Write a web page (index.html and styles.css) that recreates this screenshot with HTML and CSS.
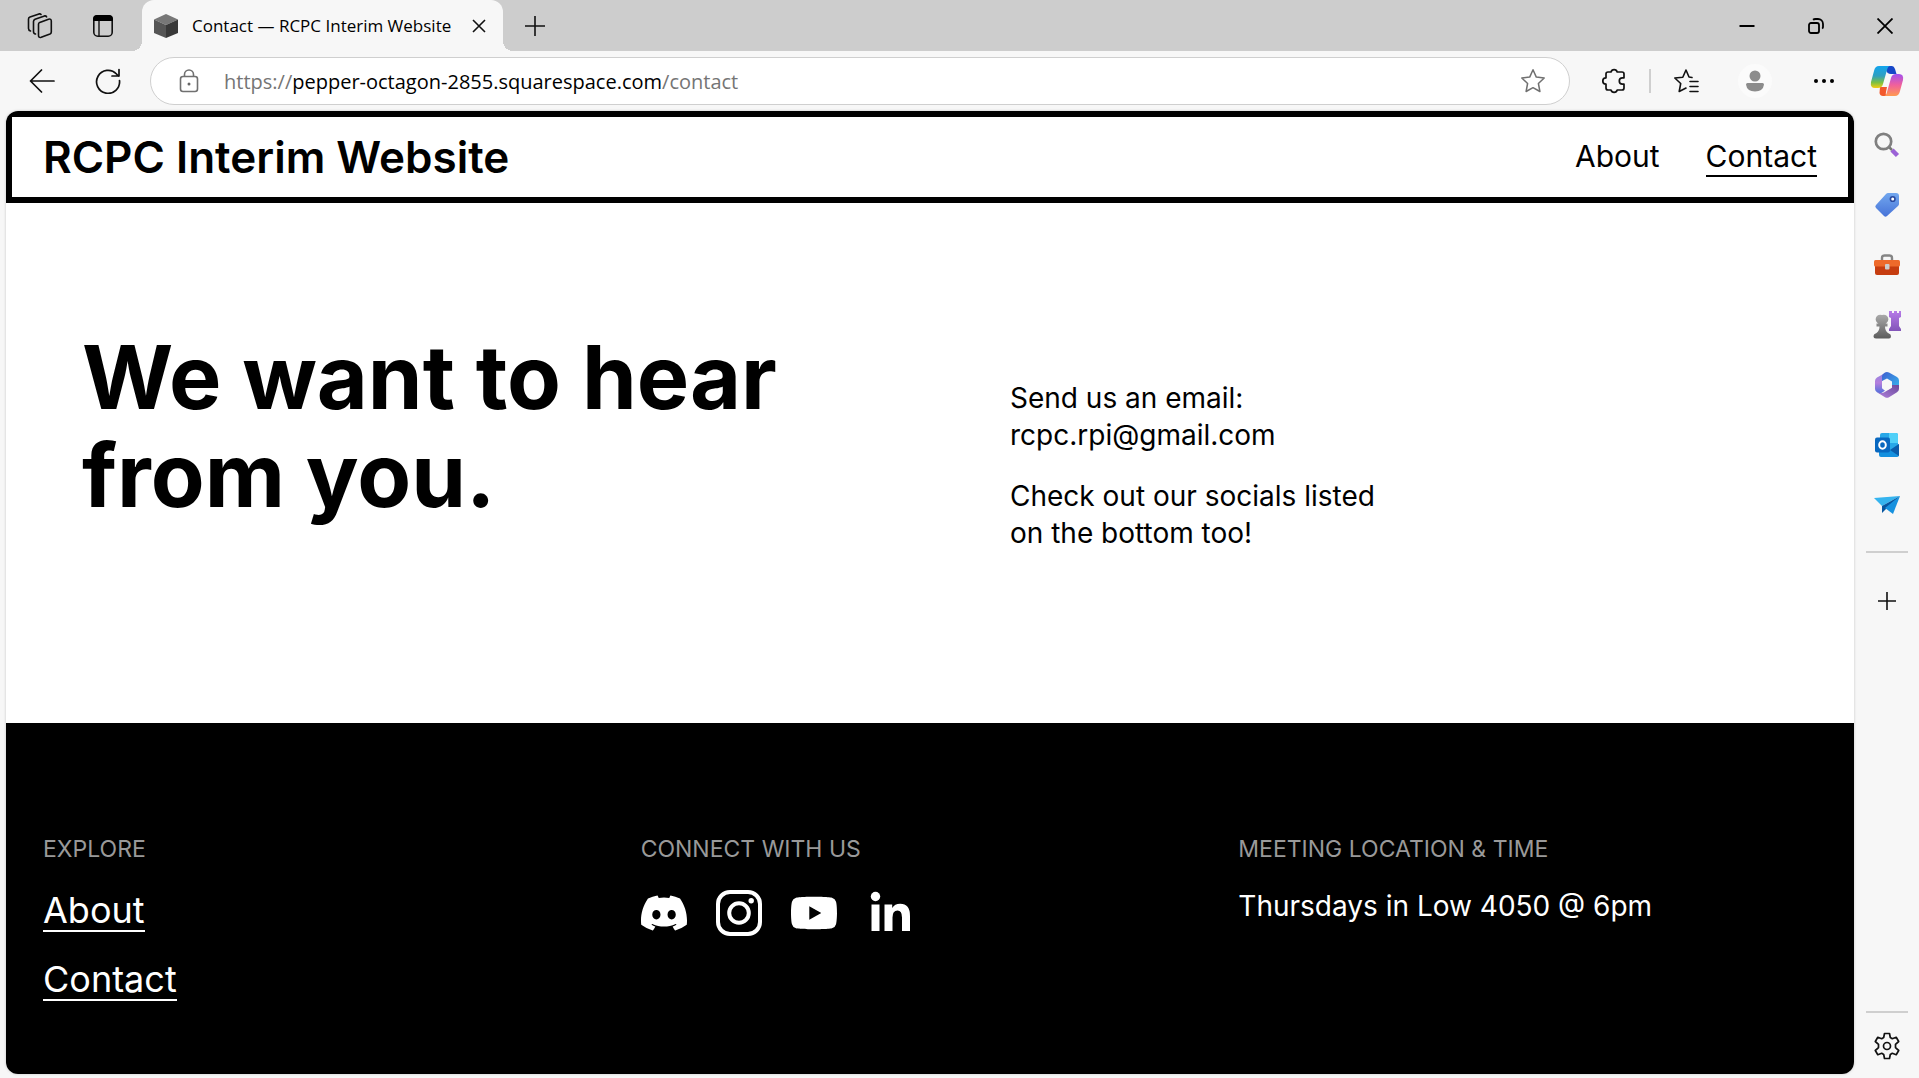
FILE: index.html
```html
<!DOCTYPE html>
<html lang="en">
<head>
<meta charset="utf-8">
<title>Contact — RCPC Interim Website</title>
<link rel="stylesheet" href="styles.css">
</head>
<body>
<div class="tabstrip">
  <button class="strip-btn" aria-label="Workspaces"><svg width="26" height="26" viewBox="0 0 26 26" fill="none" stroke="#111" stroke-width="1.6" stroke-linejoin="round" stroke-linecap="round"><path d="M11.5 11.2 Q11.5 10 12.7 9.4 L21.5 6.2 Q24.3 5.5 24.3 8 L24.3 19 Q24.3 20.400 23 21 L14.200 24.300 Q11.500 25 11.500 22.500Z"/><path d="M8.500 21 Q6.500 20.600 6.500 18.500 L6.500 8.600 Q6.500 7 8 6.300 L17.500 2.900 Q19 2.600 19.600 3.800"/><path d="M3.500 18 Q1.500 17.500 1.500 15.500 L1.500 6 Q1.500 4.600 3 4 L12 .9 Q13.400 .6 14 1.500"/></svg></button>
  <button class="strip-btn" aria-label="Tab actions"><svg width="22" height="24" viewBox="0 0 22 24"><rect x="1.800" y="1.800" width="18.400" height="20.400" rx="4" fill="none" stroke="#111" stroke-width="1.600"/><path d="M1 7V5a4 4 0 0 1 4-4h12a4 4 0 0 1 4 4v2z" fill="#000"/><path d="M7 7v15" stroke="#111" stroke-width="1.400"/></svg></button>
  <div class="tab">
    <svg width="24" height="26" viewBox="0 0 24 26"><path d="M12 1 24 6.500 12 12 0 6.500z" fill="#777"/><path d="M0 6.500 12 12v13L0 20z" fill="#555"/><path d="M24 6.500 12 12v13l12-5z" fill="#383838"/></svg>
    <span class="tab-title">Contact — RCPC Interim Website</span>
    <button class="tab-close" aria-label="Close tab"><svg width="14" height="14" viewBox="0 0 14 14" stroke="#111" stroke-width="1.600"><path d="M1 1 13 13M13 1 1 13"/></svg></button>
  </div>
  <button class="new-tab" aria-label="New tab"><svg width="22" height="22" viewBox="0 0 22 22" stroke="#111" stroke-width="1.600"><path d="M11 1v20M1 11h20"/></svg></button>
  <div class="window-controls">
    <button aria-label="Minimize"><svg width="16" height="16" viewBox="0 0 16 16" stroke="#000" stroke-width="2"><path d="M.5 8h15"/></svg></button>
    <button aria-label="Restore"><svg width="16" height="16" viewBox="0 0 16 16" fill="none" stroke="#000" stroke-width="1.800"><rect x="1" y="5" width="10" height="10" rx="2"/><path d="M5 1.800Q6 1 7.500 1H10a5 5 0 0 1 5 5v3q0 1-.8 1.600"/></svg></button>
    <button aria-label="Close"><svg width="16" height="16" viewBox="0 0 16 16" stroke="#000" stroke-width="1.800"><path d="M.5.5l15 15M15.500.5l-15 15"/></svg></button>
  </div>
</div>

<div class="workspace">
  <div class="browser-main">
    <div class="toolbar">
      <button class="nav-btn" aria-label="Back"><svg width="26" height="24" viewBox="0 0 26 24" fill="none" stroke="#111" stroke-width="1.700" stroke-linecap="round" stroke-linejoin="round"><path d="M25 12H2M12.500 1 1.500 12l11 11"/></svg></button>
      <button class="nav-btn" aria-label="Refresh"><svg width="26" height="26" viewBox="0 0 26 26" fill="none" stroke="#111" stroke-width="1.700" stroke-linecap="round" stroke-linejoin="round"><path d="M24.500 12.500A11.500 11.500 0 1 1 21.500 6l1.800 2M24 1.500V8h-7"/></svg></button>
      <div class="address">
        <svg width="20" height="24" viewBox="0 0 20 24" fill="none" stroke="#707070" stroke-width="1.600"><rect x="1.500" y="7.500" width="17" height="15" rx="2.500"/><path d="M5.500 7.500V5.500a4.500 4.500 0 0 1 9 0v2"/><circle cx="10" cy="15" r="1.500" fill="#666" stroke="none"/></svg>
        <div class="url"><span>https://</span>pepper-octagon-2855.squarespace.com<span>/contact</span></div>
        <button class="fav" aria-label="Add to favorites"><svg width="26" height="26" viewBox="0 0 26 26" fill="none" stroke="#707070" stroke-width="1.500" stroke-linejoin="round"><path d="M13 1.800l3.300 7.300 7.900.9-5.800 5.500 1.500 8L13 19.700l-6.900 3.800 1.500-8L1.800 10l7.900-.9z"/></svg></button>
      </div>
      <div class="ext-group">
        <button class="tool-btn" aria-label="Extensions"><svg width="26" height="26" viewBox="0 0 26 26" fill="none" stroke="#111" stroke-width="1.700" stroke-linejoin="round"><path d="M5 6q0-2 2-2h3a3.200 3.200 0 0 1 6.200 0H21q2 0 2 2v3.800h-1.500a3.200 3.200 0 0 0 0 6.400H23V20q0 2-2 2h-4.800a3.200 3.200 0 0 1-6.200 0H7q-2 0-2-2v-3.800a3.200 3.200 0 0 1 0-6.400z"/></svg></button>
        <span class="divider-v"></span>
        <button class="tool-btn" aria-label="Favorites"><svg width="26" height="26" viewBox="0 0 26 26" fill="none" stroke="#111" stroke-width="1.600" stroke-linejoin="round" stroke-linecap="round"><path d="M19 9.500l-3-.5-3-7-3.200 7.200-8 .8 5.900 5.500-1.500 8L13 20M17 13.500h8M17 18.500h8M17 23.500h8"/></svg></button>
      </div>
      <button class="tool-btn" aria-label="Profile"><svg width="36" height="36" viewBox="0 0 36 36"><circle cx="18" cy="18" r="17" fill="#fbfbfb"/><circle cx="18" cy="13" r="5.500" fill="#8c8c8c"/><path d="M9 21.500q0-1.500 1.500-1.500h15q1.500 0 1.500 1.500Q26 28.500 18 28.500T9 21.500z" fill="#8c8c8c"/></svg></button>
      <button class="tool-btn" aria-label="Settings and more"><svg width="20" height="6" viewBox="0 0 20 6"><circle cx="2" cy="3" r="2"/><circle cx="10" cy="3" r="2"/><circle cx="18" cy="3" r="2"/></svg></button>
    </div>

    <div class="site">
      <header class="site-header">
        <a class="site-title" href="#">RCPC Interim Website</a>
        <nav class="site-nav"><a href="#">About</a><a class="active" href="#">Contact</a></nav>
      </header>
      <main class="hero">
        <h1>We want to hear from you.</h1>
        <div class="hero-copy">
          <p>Send us an email: rcpc.rpi@gmail.com</p>
          <p>Check out our socials listed on the bottom too!</p>
        </div>
      </main>
      <footer class="site-footer">
        <section>
          <h2>EXPLORE</h2>
          <div class="footer-links"><a href="#">About</a><a href="#">Contact</a></div>
        </section>
        <section>
          <h2>CONNECT WITH US</h2>
          <div class="socials">
            <a href="#" aria-label="Discord"><svg width="46" height="46" viewBox="0 0 24 24" fill="#fff"><path d="M20.317 4.370a19.791 19.791 0 0 0-4.885-1.515.074.074 0 0 0-.079.037c-.211.375-.444.864-.608 1.250a18.270 18.270 0 0 0-5.487 0 12.640 12.640 0 0 0-.617-1.250.077.077 0 0 0-.079-.037A19.736 19.736 0 0 0 3.677 4.370a.070.070 0 0 0-.032.027C.533 9.046-.320 13.580.099 18.057a.082.082 0 0 0 .031.057 19.900 19.900 0 0 0 5.993 3.030.078.078 0 0 0 .084-.028 14.090 14.090 0 0 0 1.226-1.994.076.076 0 0 0-.041-.106 13.107 13.107 0 0 1-1.872-.892.077.077 0 0 1-.008-.128 10.200 10.200 0 0 0 .372-.292.074.074 0 0 1 .077-.010c3.928 1.793 8.180 1.793 12.062 0a.074.074 0 0 1 .078.010c.120.098.246.198.373.292a.077.077 0 0 1-.006.127 12.299 12.299 0 0 1-1.873.892.077.077 0 0 0-.041.107c.360.698.772 1.362 1.225 1.993a.076.076 0 0 0 .084.028 19.839 19.839 0 0 0 6.002-3.030.077.077 0 0 0 .032-.054c.500-5.177-.838-9.674-3.549-13.660a.061.061 0 0 0-.031-.030zM8.020 15.330c-1.183 0-2.157-1.085-2.157-2.419 0-1.333.956-2.419 2.157-2.419 1.210 0 2.176 1.096 2.157 2.420 0 1.333-.956 2.418-2.157 2.418zm7.975 0c-1.183 0-2.157-1.085-2.157-2.419 0-1.333.955-2.419 2.157-2.419 1.210 0 2.176 1.096 2.157 2.420 0 1.333-.946 2.418-2.157 2.418z"/></svg></a>
            <a href="#" aria-label="Instagram"><svg width="46" height="46" viewBox="0 0 46 46" fill="none" stroke="#fff" stroke-width="4"><rect x="2" y="2" width="42" height="42" rx="12"/><circle cx="23" cy="23" r="9.800"/><circle cx="35.200" cy="10.800" r="2.700" fill="#fff" stroke="none"/></svg></a>
            <a href="#" aria-label="YouTube"><svg width="46" height="46" viewBox="0 0 24 24" fill="#fff"><path d="M23.498 6.186a3.016 3.016 0 0 0-2.122-2.136C19.505 3.545 12 3.545 12 3.545s-7.505 0-9.377.505A3.017 3.017 0 0 0 .502 6.186C0 8.070 0 12 0 12s0 3.930.502 5.814a3.016 3.016 0 0 0 2.122 2.136c1.871.505 9.376.505 9.376.505s7.505 0 9.377-.505a3.015 3.015 0 0 0 2.122-2.136C24 15.930 24 12 24 12s0-3.930-.502-5.814zM9.545 15.568V8.432L15.818 12l-6.273 3.568z"/></svg></a>
            <a href="#" aria-label="LinkedIn"><svg width="46" height="46" viewBox="0 0 46 46" fill="#fff"><circle cx="9.500" cy="6.500" r="4.700"/><path d="M5.500 14.500h8V41h-8zM18.500 14.500h7.700v3.600q2.400-4.300 8-4.300Q44 13.800 44 26v15h-8V27.500q0-7-4.500-7-5 0-5 7V41h-8z"/></svg></a>
          </div>
        </section>
        <section>
          <h2>MEETING LOCATION &amp; TIME</h2>
          <p>Thursdays in Low 4050 @ 6pm</p>
        </section>
      </footer>
    </div>
  </div>

  <aside class="sidebar" aria-label="Browser sidebar">
    <button class="side-btn copilot" aria-label="Copilot"><svg width="34" height="32" viewBox="0 0 34 32"><defs><linearGradient id="ca" x1="0" y1="0" x2="0" y2="1"><stop offset="0" stop-color="#12a5ee"/><stop offset=".45" stop-color="#2f9fc0"/><stop offset=".75" stop-color="#7bc043"/><stop offset="1" stop-color="#f6cc10"/></linearGradient><linearGradient id="cb" x1="0" y1="0" x2="0" y2="1"><stop offset="0" stop-color="#a350ee"/><stop offset=".5" stop-color="#f0609c"/><stop offset="1" stop-color="#ff9a50"/></linearGradient></defs><path d="M17 1h5q2 0 3 3l1.500 5H21q-4 0-5-4z" fill="#1647c8"/><path d="M10 22h7l-1 5q-1 4 2 4h-5q-3 0-3.500-3z" fill="#f2582c"/><path d="M9 1h11q-2 0-3 4l-4 14q-1 4-5 4H5q-5 0-4-6L4 6q1-5 5-5z" fill="url(#ca)"/><path d="M25 31H14q2 0 3-4l4-14q1-4 5-4h3q5 0 4 6l-3 11q-1 5-5 5z" fill="url(#cb)"/></svg></button>
    <button class="side-btn" aria-label="Search"><svg width="26" height="26" viewBox="0 0 26 26" fill="none"><path d="M18 18l5.500 5.500" stroke="#9b62d6" stroke-width="4.500"/><path d="M15 15l3 3" stroke="#777" stroke-width="2.500"/><circle cx="9.500" cy="9.500" r="7.700" stroke="#808080" stroke-width="2.700"/></svg></button>
    <button class="side-btn" aria-label="Shopping"><svg width="26" height="26" viewBox="0 0 26 26"><defs><linearGradient id="tg" x1="0" y1="0" x2="0" y2="1"><stop stop-color="#72a7ee"/><stop offset="1" stop-color="#4773d8"/></linearGradient></defs><path d="M14 1h8q3 0 3 3v8q0 1-1 2L13 24q-1.500 1.500-3 0L2 16q-1.500-1.500 0-3L12 2q1-1 2-1z" fill="url(#tg)"/><circle cx="18.700" cy="7" r="2.300" fill="#fff" stroke="#29499e" stroke-width="1.600"/></svg></button>
    <button class="side-btn" aria-label="Tools"><svg width="28" height="22" viewBox="0 0 28 22"><path d="M9 7V4q0-2.500 2.500-2.500h5Q19 1.500 19 4v3" fill="none" stroke="#858585" stroke-width="2.400"/><rect x="2" y="7" width="24" height="14" rx="2" fill="#c63d10"/><rect x="1" y="6" width="26" height="6.500" rx="1.500" fill="#ee6a2b"/><rect x="12" y="10" width="4.500" height="5.500" rx="1" fill="#ccc"/></svg></button>
    <button class="side-btn" aria-label="Games"><svg width="28" height="28" viewBox="0 0 28 28"><defs><linearGradient id="pg" x1="0" y1="0" x2="0" y2="1"><stop stop-color="#aaa"/><stop offset="1" stop-color="#5c5c5c"/></linearGradient><linearGradient id="rg" x1="0" y1="0" x2="0" y2="1"><stop stop-color="#b67be8"/><stop offset="1" stop-color="#8255b8"/></linearGradient></defs><path d="M16 0h3v2h2V0h3v2h2V0h2v6l-2 1v8l2 3v2H16v-2l2-3V7l-2-1z" fill="url(#rg)"/><path d="M9 4a4.500 4.500 0 0 1 3.500 8.500h2v3H12q0 4 3 6.500 3 1 3 3 0 2.500-2 2.500H3q-2.500 0-2.500-2.500 0-2 3-3 3-2.500 3-6.500h-3v-3h2A4.500 4.500 0 0 1 9 4z" fill="url(#pg)"/></svg></button>
    <button class="side-btn" aria-label="Microsoft 365"><svg width="26" height="28" viewBox="0 0 26 28"><defs><linearGradient id="ma" x1="0" y1="0" x2="0" y2="1"><stop stop-color="#8f86e0"/><stop offset=".5" stop-color="#b57edc"/><stop offset="1" stop-color="#4a6fdc"/></linearGradient><linearGradient id="mb" x1="0" y1="0" x2="1" y2="1"><stop stop-color="#3f5fd0"/><stop offset="1" stop-color="#35b5ee"/></linearGradient><linearGradient id="mc" x1="0" y1="1" x2="1" y2="0"><stop stop-color="#b283dc"/><stop offset="1" stop-color="#6a479c"/></linearGradient></defs><path d="M13 1 3 6.500Q1 7.500 1 10v8q0 2 2 3.200l3 1.600 5-3-3-2.500v-7z" fill="url(#ma)"/><path d="M11 1.500q2-1 4 0l8 4.500q2 1 2 3.500V17l-7-3v-3.500l-5-3L8 10V5q0-2 3-3.500z" fill="url(#mb)"/><path d="M25 14v4q0 2-2 3.200l-8 5q-2 1-4 0l-8-5q6 2 9-1l6-3.500V14z" fill="url(#mc)"/><circle cx="13" cy="14" r="4.600" fill="#f7f7f7"/></svg></button>
    <button class="side-btn" aria-label="Outlook"><svg width="26" height="26" viewBox="0 0 26 26"><rect x="6" y="1" width="18" height="20" rx="2" fill="#28a8e8"/><path d="M15 1h7q2 0 2 2v8h-9z" fill="#50d0f8"/><path d="M5 14l10 5 10-7v11q0 2-2 2H7q-2 0-2-2z" fill="#1490df"/><path d="M25 12v12l-9-6z" fill="#0a5cab"/><rect x="1" y="5.500" width="15" height="15" rx="2" fill="#0868c0"/><ellipse cx="8.500" cy="13" rx="3.300" ry="3.800" fill="none" stroke="#fff" stroke-width="2"/></svg></button>
    <button class="side-btn" aria-label="Drop"><svg width="26" height="20" viewBox="0 0 26 20"><path d="M0 3 26 1 8 11z" fill="#35b4ef"/><path d="M26 1 8 11v7l4-4z" fill="#0756a0"/><path d="M26 1 11 13l8 6z" fill="#1691df"/></svg></button>
    <span class="divider-h"></span>
    <button class="side-btn" aria-label="Customize"><svg width="18" height="18" viewBox="0 0 18 18" stroke="#111" stroke-width="1.600"><path d="M9 0v18M0 9h18"/></svg></button>
    <span class="divider-h bottom"></span>
    <button class="side-btn" aria-label="Settings"><svg width="26" height="28" viewBox="0 0 26 28" fill="none" stroke="#111" stroke-width="1.700" stroke-linejoin="round"><path d="M10.500 1.500h5l.8 4 2 1.200 3.900-1.400 2.500 4.200-3.200 2.900v3.200l3.200 2.900-2.500 4.200-3.900-1.400-2 1.200-.8 4h-5l-.8-4-2-1.200-3.900 1.400-2.500-4.200 3.200-2.900v-3.200L1.300 9.500l2.500-4.200 3.900 1.400 2-1.200z"/><circle cx="13" cy="14" r="3.500"/></svg></button>
  </aside>
</div>
</body>
</html>
```
FILE: styles.css
```css
* { box-sizing: border-box; }
body {
  margin: 0;
  min-height: 100vh;
  display: flex;
  flex-direction: column;
  background: #f7f7f7;
  color: #000;
  font-family: Inter, "Liberation Sans", sans-serif;
}
button {
  display: flex;
  align-items: center;
  justify-content: center;
  padding: 0;
  border: 0;
  background: none;
  color: inherit;
}
svg { display: block; flex: none; }
a { color: inherit; text-decoration: none; }
h1, h2, p { margin: 0; }

.tabstrip {
  display: flex;
  height: 51px;
  padding-left: 8px;
  background: #cdcdcd;
  font-family: "Open Sans", "Noto Sans", sans-serif;
}
.strip-btn { width: 63px; }
.tab {
  display: flex;
  align-items: center;
  position: relative;
  width: 361px;
  margin-left: 8px;
  padding: 0 12px;
  gap: 14px;
  border-radius: 12px 12px 0 0;
  background: #f7f7f7;
}
.tab::before, .tab::after {
  content: "";
  position: absolute;
  bottom: 0;
  width: 10px;
  height: 10px;
}
.tab::before {
  right: 100%;
  background: radial-gradient(circle at 0 0, #cdcdcd 10px, #f7f7f7 10px);
}
.tab::after {
  left: 100%;
  background: radial-gradient(circle at 100% 0, #cdcdcd 10px, #f7f7f7 10px);
}
.tab-title { flex: 1; font-size: 17px; white-space: nowrap; }
.tab-close { width: 24px; height: 24px; }
.new-tab { width: 64px; }
.window-controls { display: flex; margin-left: auto; }
.window-controls button { width: 69px; }

.workspace { flex: 1; display: flex; }
.browser-main {
  flex: 1;
  display: flex;
  flex-direction: column;
  padding: 0 0 4px 6px;
}
.toolbar {
  display: flex;
  align-items: center;
  height: 60px;
  gap: 9px;
  padding-left: 3px;
  font-family: "Open Sans", "Noto Sans", sans-serif;
}
.nav-btn { width: 66px; height: 48px; }
.nav-btn + .nav-btn { margin-left: -9px; }
.address {
  flex: 1;
  display: flex;
  align-items: center;
  height: 48px;
  padding: 0 23px 0 28px;
  border: 1px solid #cfcfcf;
  border-radius: 24px;
  background: #fff;
}
.url { flex: 1; margin-left: 25px; font-size: 20px; }
.url span { color: #757575; }
.ext-group { display: flex; align-items: center; gap: 5px; margin-left: 5px; }
.tool-btn { width: 60px; height: 48px; }
.divider-v { width: 2px; height: 24px; background: #cfcfcf; }

.site {
  flex: 1;
  display: flex;
  flex-direction: column;
  overflow: hidden;
  border-radius: 12px;
  background: #fff;
  box-shadow: 0 0 3px #0003;
}
.site-header {
  display: flex;
  align-items: center;
  justify-content: space-between;
  height: 92px;
  padding: 0 31px;
  border: 6px solid #000;
}
.site-title { font-size: 44px; font-weight: 600; }
.site-nav { display: flex; gap: 46px; font-size: 30px; line-height: 38px; }
.site-nav a { border-bottom: 2px solid transparent; }
.site-nav .active { border-color: #000; }

.hero {
  display: grid;
  grid-template-columns: 1fr 1fr;
  align-items: center;
  gap: 160px;
  height: 520px;
  padding: 0 76px 74px;
}
h1 { font-size: 88px; line-height: 98px; font-weight: 700; }
.hero-copy {
  display: grid;
  gap: 24px;
  max-width: 390px;
  padding-top: 80px;
  font-size: 28px;
  line-height: 37px;
}

.site-footer {
  flex: 1;
  display: grid;
  grid-template-columns: repeat(3, 1fr);
  gap: 20px;
  padding: 110px 38px 70px 37px;
  background: #000;
  color: #fff;
}
h2 {
  color: #999;
  font-size: 23px;
  line-height: 32px;
  font-weight: 400;
}
.footer-links {
  display: flex;
  flex-direction: column;
  align-items: flex-start;
  gap: 27px;
  margin-top: 25px;
  font-size: 36px;
  line-height: 40px;
}
.footer-links a { border-bottom: 2px solid #fff; }
.socials { display: flex; gap: 29px; margin-top: 25px; }
.site-footer p { margin-top: 21px; font-size: 28px; line-height: 40px; }

.sidebar {
  display: flex;
  flex-direction: column;
  align-items: center;
  width: 65px;
  padding-bottom: 2px;
}
.side-btn { width: 65px; height: 60px; }
.copilot { margin-bottom: 4px; }
.divider-h { width: 42px; height: 2px; margin: 16px 0 18px; background: #cfcfcf; }
.divider-h.bottom { margin: auto 0 3px; }
```
